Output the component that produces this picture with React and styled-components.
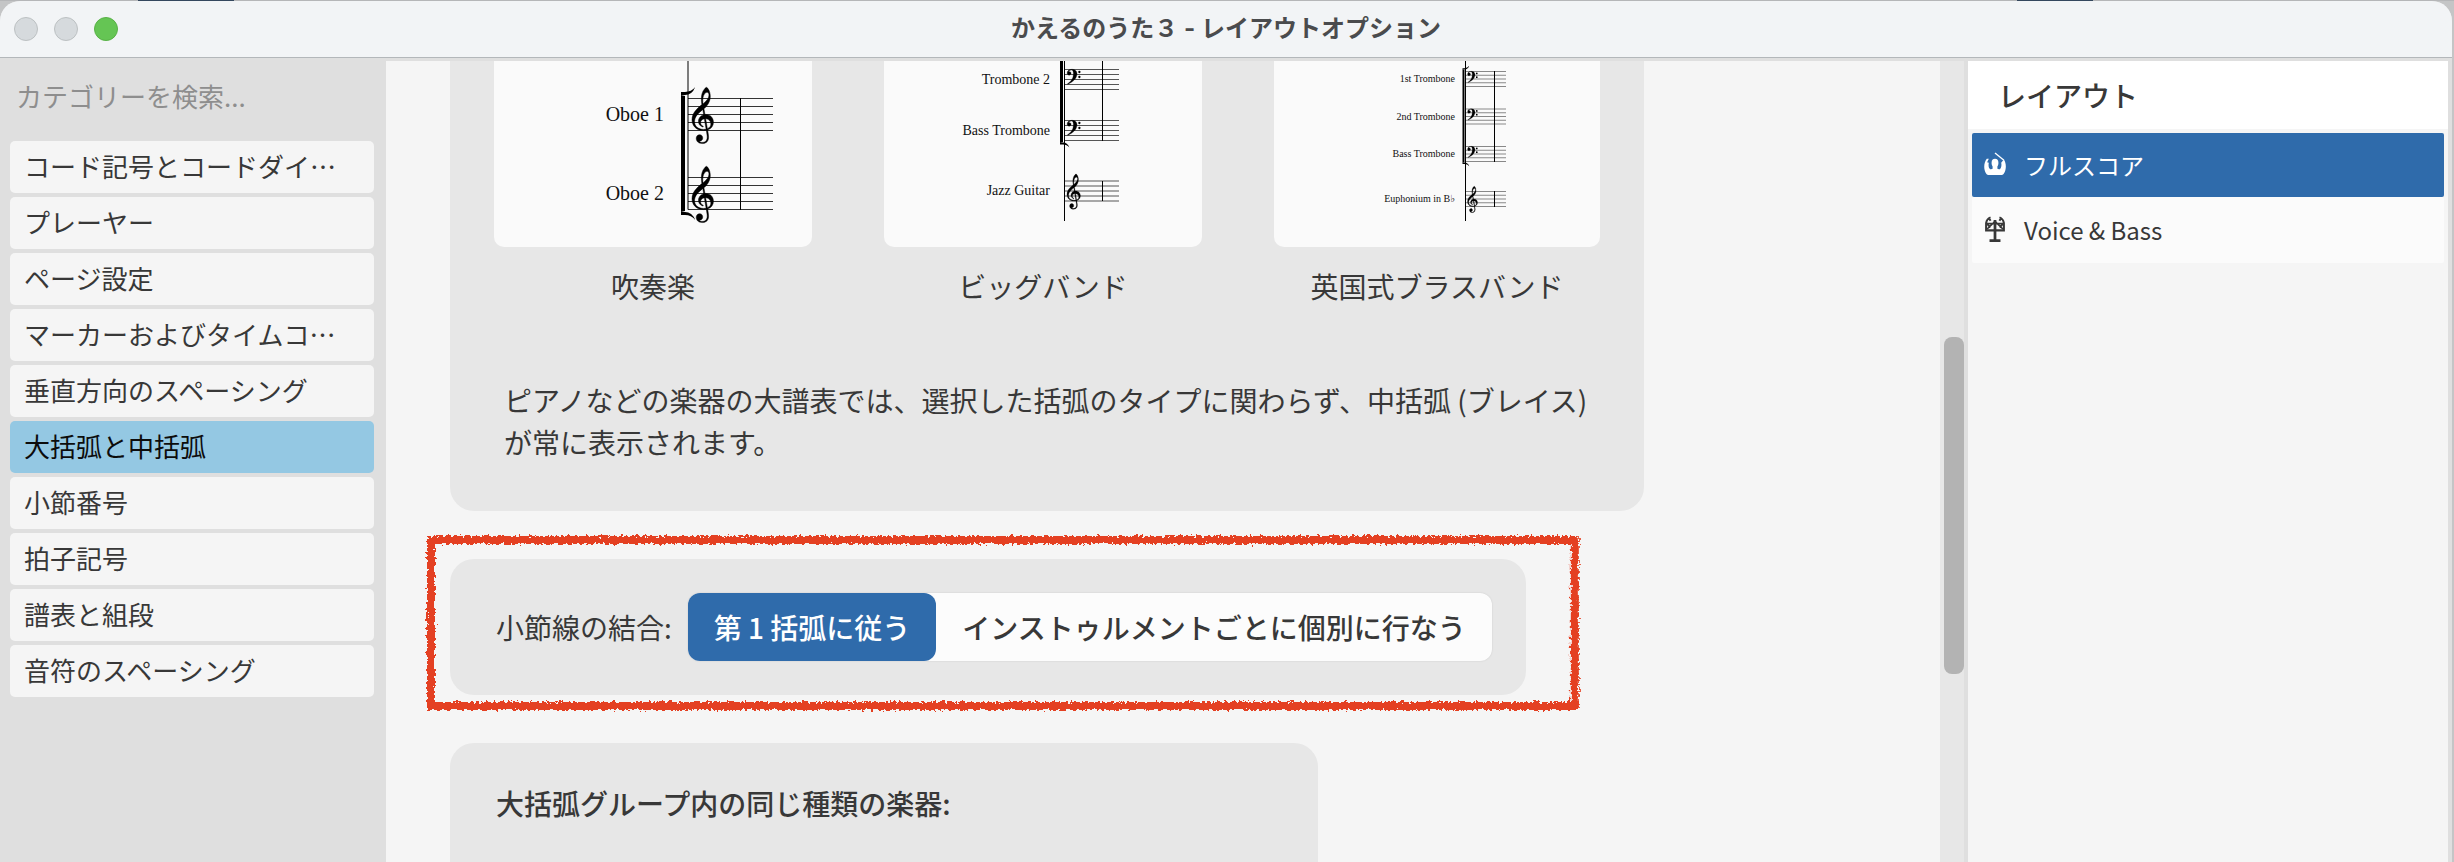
import React, { useState } from 'react';
import styled, { createGlobalStyle } from 'styled-components';

const GlobalStyle = createGlobalStyle`
  * {
    box-sizing: border-box;
  }

  body {
    margin: 0;
    color: #383838;
    font-family: 'Noto Sans CJK JP', sans-serif;
    font-size: 28px;
  }

  button,
  input {
    font-family: inherit;
    color: inherit;
    border: none;
    margin: 0;
  }
`;

const Desktop = styled.div`
  height: 100vh;
  padding: 1px 2px 0 0;
  overflow: hidden;
  background: linear-gradient(
      90deg,
      #b5b6b8 138px,
      #34475e 138px 234px,
      #b5b6b8 234px 82.2%,
      #34475e 82.2% 85.3%,
      #b5b6b8 85.3%
    )
    top / 100% 1px no-repeat,
    #c4c5c6;
`;

const Window = styled.div`
  height: 100%;
  display: flex;
  flex-direction: column;
  overflow: hidden;
  border-radius: 20px 20px 0 0;
  background-color: #dfdfdf;
`;

const TitleBar = styled.header`
  flex: none;
  height: 57px;
  padding: 0 14px;
  display: grid;
  grid-template-columns: 1fr auto 1fr;
  align-items: center;
  background-color: #f2f4f6;
  border-bottom: 1px solid #b3b7ba;
`;

const Lights = styled.div`
  display: flex;
  gap: 16px;
`;

const Light = styled.button`
  width: 24px;
  height: 24px;
  padding: 0;
  border-radius: 50%;
  border: 1px solid ${({ $on }) => ($on ? '#58b146' : '#bcc0c2')};
  background-color: ${({ $on }) => ($on ? '#65c554' : '#d6dadd')};
`;

const Title = styled.h1`
  margin: 0;
  font-family: 'Inter', 'Noto Sans CJK JP', sans-serif;
  font-size: 24px;
  line-height: 36px;
  font-weight: 700;
  color: #4a4b4d;
`;

const Body = styled.div`
  flex: 1;
  min-height: 0;
  padding: 3px 4px 0 0;
  display: flex;
`;

const Sidebar = styled.nav`
  flex: none;
  width: 386px;
  padding: 10px 12px 0 10px;
`;

const Search = styled.input`
  width: 100%;
  height: 48px;
  margin-bottom: 22px;
  padding: 0 6px;
  background: none;
  font-size: 26px;

  &::placeholder {
    color: #8e8e8e;
    opacity: 1;
  }
`;

const CategoryList = styled.ul`
  margin: 0;
  padding: 0;
  list-style: none;
  display: flex;
  flex-direction: column;
  gap: 4px;
`;

const Category = styled.button`
  display: block;
  width: 100%;
  height: 52px;
  padding: 0 14px 2px;
  border-radius: 5px;
  text-align: left;
  white-space: nowrap;
  overflow: hidden;
  font-size: 26px;
  line-height: 50px;
  color: ${({ $active }) => ($active ? '#0c0c0c' : '#383838')};
  background-color: ${({ $active }) => ($active ? '#94c8e3' : '#f5f5f5')};
`;

const Main = styled.main`
  flex: 1;
  min-width: 0;
  padding-left: 64px;
  display: flex;
  flex-direction: column;
  align-items: flex-start;
  gap: 48px;
  background-color: #f5f5f5;
`;

const Card = styled.section`
  border-radius: 24px;
  background-color: #e7e7e7;
`;

const BracketCard = styled(Card)`
  width: 1194px;
  padding: 0 44px 48px;
  border-radius: 0 0 24px 24px;
`;

const Presets = styled.div`
  display: flex;
  gap: 72px;
`;

const Preset = styled.figure`
  margin: 0;
  flex: ${({ $grow }) => ($grow ? '1' : '0 0 318px')};
  text-align: center;
`;

const Sheet = styled.div`
  height: 186px;
  border-radius: 0 0 10px 10px;
  background-color: #fafafa;

  svg {
    display: block;
  }
`;

const Caption = styled.figcaption`
  margin-top: 18px;
  line-height: 42px;
`;

const Note = styled.p`
  margin: 72px 0 0;
  padding-left: 10px;
  line-height: 42px;
`;

const Marked = styled.div`
  position: relative;
`;

const Marker = styled.svg`
  position: absolute;
  top: -24px;
  left: -24px;
  width: calc(100% + 78px);
  height: calc(100% + 40px);
  overflow: visible;
  pointer-events: none;
`;

const JoinCard = styled(Card)`
  padding: 34px 34px 34px 46px;
  display: flex;
  align-items: center;
  gap: 16px;
`;

const Segments = styled.div`
  display: flex;
  border-radius: 12px;
  background-color: #fcfcfc;
  box-shadow: 0 0 2px rgba(0, 0, 0, 0.12);
`;

const Segment = styled.button`
  height: 68px;
  padding: 0 26px;
  border-radius: 12px;
  font-size: 28px;
  font-weight: 500;
  white-space: nowrap;
  color: ${({ $active }) => ($active ? '#ffffff' : '#383838')};
  background-color: ${({ $active }) => ($active ? '#2f6bab' : 'transparent')};
`;

const GroupCard = styled(Card)`
  flex: 1;
  width: 868px;
  padding: 39px 46px 0;
  border-radius: 24px 24px 0 0;
`;

const GroupTitle = styled.h2`
  margin: 0;
  font-size: 28px;
  font-weight: 500;
  line-height: 42px;
`;

const Scrollbar = styled.div`
  flex: none;
  width: 28px;
  padding: 0 4px;
  border-right: 4px solid #dfdfdf;
  background-color: #e7e7e7;
`;

const Thumb = styled.div`
  width: 20px;
  height: 42%;
  border-radius: 8px;
  background-color: #b3b3b3;
`;

const Before = styled.div`
  height: 34.5%;
`;

const Layouts = styled.aside`
  flex: none;
  width: 480px;
  background-color: #f5f5f5;
`;

const LayoutsTitle = styled.h2`
  margin: 0;
  padding: 0 30px;
  height: 68px;
  font-size: 28px;
  font-weight: 500;
  line-height: 68px;
  background-color: #ffffff;
`;

const LayoutList = styled.div`
  padding: 4px 4px 0;
`;

const LayoutRow = styled.button`
  width: 100%;
  height: ${({ $active }) => ($active ? '64px' : '66px')};
  padding: 0 12px 2px;
  display: flex;
  align-items: center;
  gap: 18px;
  border-radius: 2px;
  font-size: 24px;
  color: ${({ $active }) => ($active ? '#ffffff' : '#383838')};
  background-color: ${({ $active }) => ($active ? '#2f6bab' : '#fbfbfb')};
`;

const G_CLEF =
  'M376 415l25 -145c3 -18 3 -18 29 -18c147 0 241 -113 241 -241c0 -113 -67 -198 -168 -238c-14 -6 -15 -5 -13 -17c11 -62 29 -157 29 -214c0 -170 -130 -200 -197 -200c-151 0 -190 98 -190 163c0 62 40 115 107 115c61 0 96 -47 96 -102c0 -58 -36 -85 -67 -94c-23 -7 -32 -10 -32 -17c0 -13 26 -29 80 -29c59 0 159 18 159 166c0 47 -15 134 -27 201c-2 12 -4 11 -15 9c-20 -4 -46 -6 -69 -6c-245 0 -364 165 -364 339c0 202 153 345 297 464c12 10 11 12 9 24c-7 41 -14 106 -14 164c0 104 24 229 98 311c20 22 51 48 65 48c11 0 37 -28 52 -50c41 -60 65 -146 65 -233c0 -153 -82 -280 -190 -381c-6 -6 -8 -7 -6 -19zM470 943c-61 0 -133 -96 -133 -252c0 -32 2 -66 6 -92c2 -13 6 -14 13 -8c79 69 174 159 174 270c0 55 -27 82 -60 82zM361 262l-21 128c-2 11 -4 12 -14 4c-47 -38 -93 -75 -153 -142c-83 -94 -93 -173 -93 -232c0 -139 113 -236 288 -236c20 0 40 2 56 5c15 3 16 3 14 14l-50 298c-2 11 -4 12 -20 8c-61 -17 -100 -60 -100 -117c0 -46 30 -89 72 -107c7 -3 15 -6 15 -13c0 -6 -4 -11 -12 -11c-7 0 -19 3 -27 6c-68 23 -115 87 -115 177c0 85 57 164 145 194c18 6 18 5 15 24zM430 103l49 -285c2 -12 4 -12 16 -6c56 28 94 79 94 142c0 88 -67 156 -148 163c-12 1 -13 -2 -11 -14z';

const F_CLEF =
  'M252 262C400 262 500 180 500 45C500 -200 310 -370 45 -483C22 -492 8 -474 28 -461C220 -335 320 -190 320 40C320 160 292 228 222 228C150 228 88 190 72 145C80 150 95 154 108 154C164 154 206 114 206 60C206 8 164 -34 108 -34C52 -34 6 12 6 75C6 180 110 262 252 262Z';

const Clef = ({ type, x, y, space }) => {
  const line = type === 'g' ? 3 : 1;
  const scale = space / 250;
  return (
    <g transform={`translate(${x} ${y + line * space}) scale(${scale} ${-scale})`}>
      <path d={type === 'g' ? G_CLEF : F_CLEF} stroke="#000" strokeWidth="14" fillRule="evenodd" />
      {type === 'f' && (
        <>
          <circle cx="620" cy="125" r="58" />
          <circle cx="620" cy="-125" r="58" />
        </>
      )}
    </g>
  );
};

const Score = ({ score }) => {
  const { space, left, right, clefX, barX, labelX, fontSize, ink, staves, bars, system, bracket } = score;
  const { x, width, top, bottom } = bracket;
  const hook = space * 1.6;
  return (
    <svg width="318" height="186" viewBox="0 0 318 186">
      {staves.map(({ name, clef, y }) => (
        <g key={name}>
          <text
            x={labelX}
            y={y + space * 2 + fontSize * 0.3}
            textAnchor="end"
            fontFamily="'Liberation Serif', 'DejaVu Sans', serif"
            fontSize={fontSize}
            fill="#111"
          >
            {name}
          </text>
          {[0, 1, 2, 3, 4].map((n) => (
            <path key={n} d={`M${left} ${y + n * space}H${right}`} stroke={ink} strokeWidth="1" />
          ))}
          <Clef type={clef} x={clefX} y={y} space={space} />
        </g>
      ))}
      {bars.map(([from, to]) => (
        <path key={from} d={`M${barX} ${from}V${to}`} stroke="#000" strokeWidth="1" />
      ))}
      <path d={`M${left} 0V${system}`} stroke="#000" strokeWidth="1" />
      <rect x={x} y={top} width={width} height={bottom - top} />
      {top > 0 && (
        <path
          d={`M${x} ${top}v${-space / 2}h${width}q${hook / 2} 0 ${hook * 0.8} ${-hook / 2.6}q${-hook / 4} ${hook / 1.6} ${-hook * 0.8} ${hook / 1.6}z`}
        />
      )}
      <path
        d={`M${x} ${bottom}v${space / 2}h${width}q${hook / 2} 0 ${hook * 0.8} ${hook / 2.6}q${-hook / 4} ${-hook / 1.6} ${-hook * 0.8} ${-hook / 1.6}z`}
      />
    </svg>
  );
};

const presets = [
  {
    label: '吹奏楽',
    score: {
      space: 8,
      left: 194,
      right: 279,
      clefX: 198,
      barX: 246.5,
      labelX: 170,
      fontSize: 20,
      ink: '#333',
      system: 148.5,
      staves: [
        { name: 'Oboe 1', clef: 'g', y: 37.5 },
        { name: 'Oboe 2', clef: 'g', y: 116.5 },
      ],
      bars: [[37, 149]],
      bracket: { x: 187, width: 4, top: 35, bottom: 150 },
    },
  },
  {
    label: 'ビッグバンド',
    score: {
      space: 5,
      left: 180.5,
      right: 235,
      clefX: 183,
      barX: 218.5,
      labelX: 166,
      fontSize: 14,
      ink: '#555',
      system: 160,
      staves: [
        { name: 'Trombone 2', clef: 'f', y: 8.5 },
        { name: 'Bass Trombone', clef: 'f', y: 59.5 },
        { name: 'Jazz Guitar', clef: 'g', y: 120 },
      ],
      bars: [
        [0, 80],
        [120, 140],
      ],
      bracket: { x: 176, width: 3, top: 0, bottom: 81 },
    },
  },
  {
    label: '英国式ブラスバンド',
    grow: true,
    score: {
      space: 3.75,
      left: 191.5,
      right: 232,
      clefX: 193.5,
      barX: 220.5,
      labelX: 181,
      fontSize: 10,
      ink: '#888',
      system: 160,
      staves: [
        { name: '1st Trombone', clef: 'f', y: 10.5 },
        { name: '2nd Trombone', clef: 'f', y: 48 },
        { name: 'Bass Trombone', clef: 'f', y: 85.5 },
        { name: 'Euphonium in B♭', clef: 'g', y: 130.5 },
      ],
      bars: [
        [10, 101],
        [130, 146],
      ],
      bracket: { x: 188.5, width: 2, top: 9, bottom: 101 },
    },
  },
];

const ConductorIcon = () => (
  <svg width="22" height="24" viewBox="0 0 64 70" fill="currentColor" aria-hidden="true">
    <path d="M32 3L58 24" stroke="currentColor" strokeWidth="4" />
    <ellipse cx="32" cy="32" rx="10" ry="12" />
    <path d="M14 20L8 20C-1 32 -2 50 6 63Q8 67 12 67H52Q56 67 58 63C66 50 65 32 58 22L50 31C52 38 50 48 46 50Q42 51 39 49V38H25V49Q22 51 18 50C14 48 12 40 14 31L9 30Z" />
  </svg>
);

const StandIcon = () => (
  <svg width="22" height="26" viewBox="0 0 64 76" fill="none" stroke="currentColor" strokeWidth="6" aria-hidden="true">
    <path d="M6 20V42H58V20M6 21Q8 8 19 4M58 21Q56 8 45 4M14 6l5 8M50 6l-5 8" />
    <path d="M32 12V72M16 72H48" strokeWidth="8" />
    <path d="M7 22H57M9 38L32 16L55 38M8 22L18 34M56 22L46 34" strokeWidth="5" />
  </svg>
);

const categories = [
  'コード記号とコードダイ…',
  'プレーヤー',
  'ページ設定',
  'マーカーおよびタイムコ…',
  '垂直方向のスペーシング',
  '大括弧と中括弧',
  '小節番号',
  '拍子記号',
  '譜表と組段',
  '音符のスペーシング',
];

const joinOptions = ['第 1 括弧に従う', 'インストゥルメントごとに個別に行なう'];

const layouts = [
  { name: 'フルスコア', Icon: ConductorIcon },
  { name: 'Voice & Bass', Icon: StandIcon },
];

// crayon-like frame drawn over the barline setting
const CrayonFrame = () => (
  <Marker aria-hidden="true">
    <filter id="crayon" filterUnits="userSpaceOnUse" x="-10" y="-10" width="1300" height="240">
      <feTurbulence type="fractalNoise" baseFrequency="0.35" numOctaves="2" seed="4" result="noise" />
      <feDisplacementMap in="SourceGraphic" in2="noise" scale="7" xChannelSelector="R" yChannelSelector="G" />
    </filter>
    <svg x="5" y="5" width="calc(100% - 10px)" height="calc(100% - 10px)" overflow="visible">
      <rect width="100%" height="100%" fill="none" stroke="#e43f22" strokeWidth="8" filter="url(#crayon)" />
    </svg>
  </Marker>
);

const App = () => {
  const [category, setCategory] = useState('大括弧と中括弧');
  const [join, setJoin] = useState(joinOptions[0]);
  const [layout, setLayout] = useState('フルスコア');
  const [query, setQuery] = useState('');

  return (
    <Desktop lang="ja">
      <GlobalStyle />
      <Window>
        <TitleBar>
          <Lights>
            <Light aria-label="閉じる" />
            <Light aria-label="しまう" />
            <Light $on aria-label="拡大" />
          </Lights>
          <Title>かえるのうた３ - レイアウトオプション</Title>
        </TitleBar>
        <Body>
          <Sidebar>
            <Search
              type="text"
              aria-label="カテゴリーを検索"
              placeholder="カテゴリーを検索..."
              value={query}
              onChange={({ target }) => setQuery(target.value)}
            />
            <CategoryList>
              {categories.map((name) => (
                <li key={name}>
                  <Category $active={name === category} onClick={() => setCategory(name)}>
                    {name}
                  </Category>
                </li>
              ))}
            </CategoryList>
          </Sidebar>
          <Main>
            <BracketCard>
              <Presets>
                {presets.map(({ label, grow, score }) => (
                  <Preset key={label} $grow={grow}>
                    <Sheet>
                      <Score score={score} />
                    </Sheet>
                    <Caption>{label}</Caption>
                  </Preset>
                ))}
              </Presets>
              <Note>
                ピアノなどの楽器の大譜表では、選択した括弧のタイプに関わらず、中括弧 (ブレイス)
                <br />
                が常に表示されます。
              </Note>
            </BracketCard>
            <Marked>
              <JoinCard>
                <span id="join-label">小節線の結合:</span>
                <Segments role="group" aria-labelledby="join-label">
                  {joinOptions.map((name) => (
                    <Segment
                      key={name}
                      $active={name === join}
                      aria-pressed={name === join}
                      onClick={() => setJoin(name)}
                    >
                      {name}
                    </Segment>
                  ))}
                </Segments>
              </JoinCard>
              <CrayonFrame />
            </Marked>
            <GroupCard>
              <GroupTitle>大括弧グループ内の同じ種類の楽器:</GroupTitle>
            </GroupCard>
          </Main>
          <Scrollbar>
            <Before />
            <Thumb />
          </Scrollbar>
          <Layouts>
            <LayoutsTitle>レイアウト</LayoutsTitle>
            <LayoutList>
              {layouts.map(({ name, Icon }) => (
                <LayoutRow key={name} $active={name === layout} onClick={() => setLayout(name)}>
                  <Icon />
                  {name}
                </LayoutRow>
              ))}
            </LayoutList>
          </Layouts>
        </Body>
      </Window>
    </Desktop>
  );
};

export default App;
